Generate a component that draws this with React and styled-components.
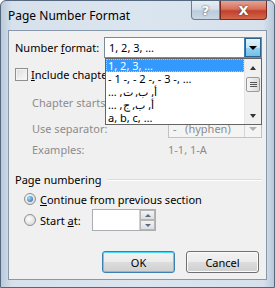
import React from "react";
import styled, { createGlobalStyle } from "styled-components";

const Global = createGlobalStyle`
  html, body { margin: 0; padding: 0; background: #fff; }
  body { font-family: "Noto Sans", "Open Sans", sans-serif; font-size: 11px; }
  * { box-sizing: border-box; }
`;

const Window = styled.div`
  width: 275px;
  height: 288px;
  display: flex;
  flex-direction: column;
  background: linear-gradient(90deg, #b9c9da 0%, #d6e1ec 4%, #dbe5ef 50%, #d6e1ec 96%, #b9c9da 100%);
  border: 1px solid #54677c;
  border-radius: 6px 6px 0 0;
  padding: 0 7px 7px 7px;
`;

const TitleBar = styled.div`
  height: 29px;
  display: flex;
  align-items: flex-start;
  justify-content: space-between;
  flex-shrink: 0;
`;

const Title = styled.div`
  font-family: "Noto Sans", sans-serif;
  font-size: 12px;
  color: #000;
  padding-top: 6px;
`;

const Caption = styled.div`
  display: flex;
`;

const CapBtn = styled.div`
  width: ${(p) => p.$w}px;
  height: 19px;
  display: flex;
  align-items: center;
  justify-content: center;
  border: 1px solid ${(p) => (p.$close ? "#7a2a1f" : "#6e7c8c")};
  border-top: none;
  border-radius: ${(p) => (p.$close ? "0 0 4px 0" : "0 0 0 4px")};
  background: ${(p) =>
    p.$close
      ? "linear-gradient(180deg, #e8a293 0%, #d6705b 45%, #c4402a 55%, #d2674d 100%)"
      : "linear-gradient(180deg, #e6edf4 0%, #d5dfea 45%, #bccbdc 55%, #cbd7e4 100%)"};
  color: #fff;
  font-weight: bold;
  font-size: 13px;
  font-family: "DejaVu Sans", sans-serif;
  text-shadow: 0 0 2px #333;
`;

const Client = styled.div`
  flex: 1;
  background: #f0f0f0;
  border: 1px solid #8798ab;
  position: relative;
  padding: 6px 4px 0 6px;
  display: flex;
  flex-direction: column;
`;

const Row = styled.div`
  display: flex;
  align-items: center;
  height: ${(p) => p.$h || 20}px;
  margin-top: ${(p) => p.$mt || 0}px;
  padding-left: ${(p) => p.$indent || 0}px;
  color: ${(p) => (p.$disabled ? "#8c8c8c" : "#000")};
  white-space: nowrap;
`;

const Label = styled.span`
  width: ${(p) => p.$w}px;
  flex-shrink: 0;
  white-space: nowrap;
`;

const U = styled.span`
  text-decoration: underline;
`;

const Combo = styled.div`
  width: ${(p) => p.$w}px;
  height: ${(p) => p.$h}px;
  display: flex;
  align-items: center;
  border: 1px solid ${(p) => (p.$disabled ? "#c2c2c2" : "#7a8a99")};
  background: ${(p) => (p.$disabled ? "#f4f4f4" : "#fff")};
  color: ${(p) => (p.$disabled ? "#8c8c8c" : "#000")};
  padding-left: 4px;
`;

const ComboText = styled.span`
  flex: 1;
  white-space: pre;
`;

const DropBtn = styled.div`
  width: 17px;
  height: 100%;
  display: flex;
  align-items: center;
  justify-content: center;
  border-left: 1px solid ${(p) => (p.$disabled ? "#d5d5d5" : "#3c7fb1")};
  background: ${(p) =>
    p.$disabled
      ? "#f4f4f4"
      : "linear-gradient(180deg, #e5f4fc 0%, #c4e5f6 50%, #98d1ef 51%, #6cbde8 100%)"};
  box-shadow: ${(p) => (p.$disabled ? "none" : "inset 0 0 0 1px #2c628b")};
`;

const Arrow = styled.div`
  width: 0;
  height: 0;
  border-left: 4px solid transparent;
  border-right: 4px solid transparent;
  border-top: 4px solid ${(p) => (p.$c ? p.$c : "#000")};
`;

const List = styled.div`
  position: absolute;
  left: 96px;
  top: 27px;
  width: 157px;
  height: 67px;
  background: #fff;
  border: 1px solid #646464;
  display: flex;
  z-index: 5;
`;

const Items = styled.div`
  flex: 1;
  display: flex;
  flex-direction: column;
  overflow: hidden;
`;

const Item = styled.div`
  height: 13px;
  flex-shrink: 0;
  padding-left: 1px;
  white-space: nowrap;
  color: ${(p) => (p.$sel ? "#fff" : "#000")};
  background: ${(p) => (p.$sel ? "#3399ff" : "transparent")};
  border: 1px dotted ${(p) => (p.$sel ? "#a5cdf5" : "transparent")};
  display: flex;
  align-items: center;
`;

const Rtl = styled.span`
  direction: rtl;
  unicode-bidi: isolate;
  display: inline-block;
`;

const Scroll = styled.div`
  width: 17px;
  background: #f0f0f0;
  border-left: 1px solid #e6e6e6;
  display: flex;
  flex-direction: column;
  align-items: center;
`;

const ScrollBtn = styled.div`
  height: 17px;
  width: 100%;
  display: flex;
  align-items: center;
  justify-content: center;
`;

const Spacer = styled.div`
  flex: 1;
`;

const Thumb = styled.div`
  width: 14px;
  height: 15px;
  margin-top: 1px;
  border: 1px solid #9a9a9a;
  border-radius: 2px;
  background: linear-gradient(90deg, #f6f6f6, #dadada);
  display: flex;
  flex-direction: column;
  align-items: center;
  justify-content: center;
  gap: 1px;
`;

const Grip = styled.div`
  width: 7px;
  height: 1px;
  background: #555;
`;

const UpArrow = styled.div`
  width: 0;
  height: 0;
  border-left: 3.5px solid transparent;
  border-right: 3.5px solid transparent;
  border-bottom: 4px solid #333;
`;

const DownArrow = styled.div`
  width: 0;
  height: 0;
  border-left: 3.5px solid transparent;
  border-right: 3.5px solid transparent;
  border-top: 4px solid #333;
`;

const SmallUp = styled(UpArrow)`
  border-left-width: 3px;
  border-right-width: 3px;
  border-bottom: 3px solid #5a6a86;
`;

const SmallDown = styled(DownArrow)`
  border-left-width: 3px;
  border-right-width: 3px;
  border-top: 3px solid #5a6a86;
`;

const Check = styled.div`
  width: 13px;
  height: 13px;
  border: 1px solid #8f8f8f;
  background: linear-gradient(135deg, #dcdcdc, #fbfbfb);
  box-shadow: inset 0 0 0 1px #f4f4f4;
  margin-right: 3px;
  flex-shrink: 0;
`;

const GroupHead = styled.div`
  display: flex;
  align-items: center;
  height: 18px;
  margin-top: ${(p) => p.$mt}px;
  gap: 6px;
  &::after {
    content: "";
    flex: 1;
    height: 1px;
    background: #dcdcdc;
    box-shadow: 0 1px 0 #fff;
  }
`;

const Radio = styled.div`
  width: 12px;
  height: 12px;
  border-radius: 50%;
  border: 1px solid #8f8f8f;
  background: radial-gradient(circle at 40% 40%, #fefefe, #d0d0d0);
  margin-right: 4px;
  flex-shrink: 0;
  display: flex;
  align-items: center;
  justify-content: center;
  &::after {
    content: "";
    display: ${(p) => (p.$on ? "block" : "none")};
    width: 6px;
    height: 6px;
    border-radius: 50%;
    background: radial-gradient(circle at 35% 35%, #9ce0ff, #1f5e9e);
  }
`;

const Spin = styled.div`
  width: 64px;
  height: 22px;
  border: 1px solid #abadb3;
  background: #fff;
  display: flex;
  justify-content: flex-end;
`;

const SpinBtns = styled.div`
  width: 16px;
  display: flex;
  flex-direction: column;
  border-left: 1px solid #cfcfcf;
`;

const SpinBtn = styled.div`
  flex: 1;
  display: flex;
  align-items: center;
  justify-content: center;
  background: linear-gradient(180deg, #f3f3f3, #dedede);
  border: 1px solid #b5b5b5;
`;

const Buttons = styled.div`
  display: flex;
  justify-content: flex-end;
  gap: 11px;
  margin-top: 20px;
  padding-right: 3px;
`;

const Button = styled.div`
  width: 73px;
  height: 22px;
  display: flex;
  align-items: center;
  justify-content: center;
  border: 1px solid ${(p) => (p.$def ? "#3c7fb1" : "#707070")};
  border-radius: 3px;
  background: linear-gradient(180deg, #f2f2f2 0%, #ebebeb 50%, #dddddd 51%, #cfcfcf 100%);
  box-shadow: inset 0 0 0 1px ${(p) => (p.$def ? "#48d8fb" : "#fcfcfc")};
  color: #000;
`;

export default function App() {
  return (
    <>
      <Global />
      <Window>
        <TitleBar>
          <Title>Page Number Format</Title>
          <Caption>
            <CapBtn $w={29}>?</CapBtn>
            <CapBtn $w={47} $close>
              X
            </CapBtn>
          </Caption>
        </TitleBar>
        <Client>
          <Row $h={21}>
            <Label $w={89}>
              Number <U>f</U>ormat:
            </Label>
            <Combo $w={158} $h={21}>
              <ComboText>1, 2, 3, …</ComboText>
              <DropBtn>
                <Arrow />
              </DropBtn>
            </Combo>
          </Row>
          <List>
            <Items>
              <Item $sel>1, 2, 3, …</Item>
              <Item>- 1 -, - 2 -, - 3 -, …</Item>
              <Item>
                <Rtl>أ, ب, ت, …</Rtl>
              </Item>
              <Item>
                <Rtl>أ, ب, ج, …</Rtl>
              </Item>
              <Item>a, b, c, …</Item>
            </Items>
            <Scroll>
              <ScrollBtn>
                <UpArrow />
              </ScrollBtn>
              <Thumb>
                <Grip />
                <Grip />
                <Grip />
              </Thumb>
              <Spacer />
              <ScrollBtn>
                <DownArrow />
              </ScrollBtn>
            </Scroll>
          </List>
          <Row $mt={6}>
            <Check />
            <span>
              <U>I</U>nclude chapter number
            </span>
          </Row>
          <Row $mt={8} $indent={17} $disabled>
            <span>Chapter starts with style:</span>
          </Row>
          <Row $mt={7} $indent={17} $disabled $h={19}>
            <Label $w={136}>Use separator:</Label>
            <Combo $w={94} $h={19} $disabled>
              <ComboText>-   (hyphen)</ComboText>
              <DropBtn $disabled>
                <Arrow $c="#b0b0b0" />
              </DropBtn>
            </Combo>
          </Row>
          <Row $mt={1} $indent={17} $disabled>
            <Label $w={136}>Examples:</Label>
            <span>1-1, 1-A</span>
          </Row>
          <GroupHead $mt={11}>Page numbering</GroupHead>
          <Row $mt={1} $indent={9}>
            <Radio $on />
            <span>
              <U>C</U>ontinue from previous section
            </span>
          </Row>
          <Row $indent={9} $h={22}>
            <Radio />
            <Label $w={52}>
              Start <U>a</U>t:
            </Label>
            <Spin>
              <SpinBtns>
                <SpinBtn>
                  <SmallUp />
                </SpinBtn>
                <SpinBtn>
                  <SmallDown />
                </SpinBtn>
              </SpinBtns>
            </Spin>
          </Row>
          <Buttons>
            <Button $def>OK</Button>
            <Button>Cancel</Button>
          </Buttons>
        </Client>
      </Window>
    </>
  );
}
